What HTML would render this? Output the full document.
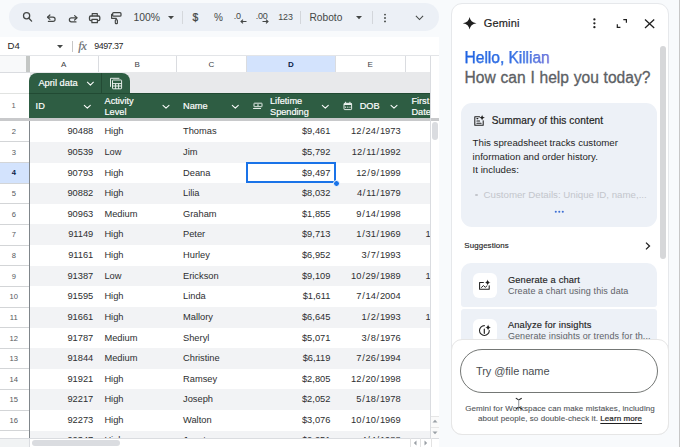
<!DOCTYPE html><html><head><meta charset="utf-8"><style>
*{margin:0;padding:0;box-sizing:border-box}
html,body{width:680px;height:447px;overflow:hidden;background:#f8fafc;font-family:"Liberation Sans",sans-serif;position:relative}
.a{position:absolute}
.t{position:absolute;white-space:nowrap;line-height:1}
</style></head><body>
<div class="a" style="left:9px;top:3px;width:429.5px;height:28px;border-radius:14px;background:#ecf0f6"></div>
<svg class="a" style="left:0;top:0" width="440" height="32" viewBox="0 0 440 32">
<g fill="none" stroke="#444746" stroke-linecap="round" stroke-linejoin="round">
<circle cx="26.6" cy="15.8" r="3.1" stroke-width="1.25"/>
<path d="M28.9 18.2 L31.6 21.1" stroke-width="1.35"/>
<path d="M49.9 15 L47.5 17.2 L49.9 19.4" stroke-width="1.2"/>
<path d="M47.8 17.2 H53 A2.1 2.1 0 0 1 53 21.4 H48.4" stroke-width="1.2"/>
<path d="M74.6 15.6 L77 17.8 L74.6 20" stroke-width="1.2"/>
<path d="M76.7 17.8 H71.4 A2.05 2.05 0 0 0 71.4 21.9 H76" stroke-width="1.2"/>
<path d="M92.2 16 V13.7 H97.3 V16" stroke-width="1.2"/>
<rect x="89.5" y="16" width="10.3" height="4.6" rx="1.3" stroke-width="1.3"/>
<rect x="91.9" y="19.3" width="5.5" height="3.4" fill="#ecf0f6" stroke-width="1.2"/>
<rect x="112.6" y="12.7" width="8.4" height="3.5" rx="1" stroke-width="1.25"/>
<path d="M112.6 14.4 H111.6 V18.3 H116.3 V19.7" stroke-width="1.15"/>
<rect x="115.3" y="19.7" width="2.1" height="3.9" rx="0.7" stroke-width="1.15"/>
</g></svg>
<div class="t" style="left:133.5px;top:13.3px;font-size:10.4px;color:#444746">100%</div>
<svg class="a" style="left:168px;top:15.5px" width="6" height="4" viewBox="0 0 6 4"><path d="M0 0 H6 L3 3.2 Z" fill="#444746"/></svg>
<div class="a" style="left:182px;top:10.5px;width:1px;height:13px;background:#d5d8dc"></div>
<div class="t" style="left:192.5px;top:12.8px;font-size:10.3px;color:#444746;-webkit-text-stroke:0.25px #444746">$</div>
<div class="t" style="left:214px;top:13.4px;font-size:10px;color:#444746">%</div>
<div class="t" style="left:233.8px;top:11.9px;font-size:9px;color:#444746;letter-spacing:-0.3px">.0</div>
<svg class="a" style="left:240px;top:19px" width="7" height="5" viewBox="0 0 7 5"><path d="M6.5 2.5 H1 M3 0.6 L1 2.5 L3 4.4" fill="none" stroke="#444746" stroke-width="1.1"/></svg>
<div class="t" style="left:255.8px;top:11.9px;font-size:9px;color:#444746;letter-spacing:-0.3px">.00</div>
<svg class="a" style="left:261.5px;top:19px" width="7" height="5" viewBox="0 0 7 5"><path d="M0.5 2.5 H6 M4 0.6 L6 2.5 L4 4.4" fill="none" stroke="#444746" stroke-width="1.1"/></svg>
<div class="t" style="left:278.2px;top:13.4px;font-size:8.9px;color:#444746">123</div>
<div class="a" style="left:299.5px;top:10.5px;width:0.8px;height:13px;background:#d3d6db"></div>
<div class="t" style="left:309.5px;top:13.2px;font-size:10.2px;color:#444746">Roboto</div>
<svg class="a" style="left:355.5px;top:15.5px" width="6" height="4" viewBox="0 0 6 4"><path d="M0 0 H6 L3 3.2 Z" fill="#444746"/></svg>
<div class="a" style="left:371.5px;top:10.5px;width:0.8px;height:13px;background:#d3d6db"></div>
<svg class="a" style="left:383px;top:12.5px" width="4" height="10" viewBox="0 0 4 10"><circle cx="2" cy="1.6" r="0.95" fill="#444746"/><circle cx="2" cy="5" r="0.95" fill="#444746"/><circle cx="2" cy="8.4" r="0.95" fill="#444746"/></svg>
<svg class="a" style="left:415px;top:15px" width="9" height="6" viewBox="0 0 9 6"><path d="M0.9 0.9 L4.5 4.5 L8.1 0.9" fill="none" stroke="#444746" stroke-width="1.05"/></svg>
<div class="a" style="left:0;top:37px;width:438.5px;height:19px;background:#fff"></div>
<div class="t" style="left:7.5px;top:41.3px;font-size:9.6px;color:#1f1f1f">D4</div>
<svg class="a" style="left:57px;top:44.5px" width="6" height="4" viewBox="0 0 6 4"><path d="M0 0 H6 L3 3.2 Z" fill="#444746"/></svg>
<div class="a" style="left:71.5px;top:41px;width:1px;height:11px;background:#c7c7c7"></div>
<div class="t" style="left:78.3px;top:39.6px;font-size:12.5px;color:#6b6f73;font-family:'Liberation Serif',serif;font-style:italic;letter-spacing:-0.6px;-webkit-text-stroke:0.2px #6b6f73">fx</div>
<div class="t" style="left:94.3px;top:41.8px;font-size:8.9px;color:#1f1f1f;letter-spacing:-0.5px">9497.37</div>
<div class="a" style="left:0;top:55.5px;width:430.5px;height:382.5px;background:#fff"></div>
<div class="a" style="left:0;top:55.5px;width:26px;height:16.5px;background:#f8f9fa"></div>
<div class="a" style="left:26px;top:55.5px;width:3.8px;height:16.5px;background:#c4c7c5"></div>
<div class="a" style="left:246.3px;top:55.5px;width:89.19999999999999px;height:16.5px;background:#d3e3fd"></div>
<div class="a" style="left:0;top:71.5px;width:430.5px;height:1px;background:#dadce0"></div>
<div class="a" style="left:97.5px;top:55.5px;width:1px;height:16.5px;background:#dadce0"></div>
<div class="a" style="left:176.0px;top:55.5px;width:1px;height:16.5px;background:#dadce0"></div>
<div class="a" style="left:245.8px;top:55.5px;width:1px;height:16.5px;background:#dadce0"></div>
<div class="a" style="left:335.0px;top:55.5px;width:1px;height:16.5px;background:#dadce0"></div>
<div class="a" style="left:404.5px;top:55.5px;width:1px;height:16.5px;background:#dadce0"></div>
<div class="t" style="left:29.5px;width:68.5px;top:60.6px;text-align:center;font-size:8px;color:#3c4043;font-weight:normal">A</div>
<div class="t" style="left:98px;width:78.5px;top:60.6px;text-align:center;font-size:8px;color:#3c4043;font-weight:normal">B</div>
<div class="t" style="left:176.5px;width:69.80000000000001px;top:60.6px;text-align:center;font-size:8px;color:#3c4043;font-weight:normal">C</div>
<div class="t" style="left:246.3px;width:89.19999999999999px;top:60.6px;text-align:center;font-size:8px;color:#0a1d47;font-weight:bold">D</div>
<div class="t" style="left:335.5px;width:69.5px;top:60.6px;text-align:center;font-size:8px;color:#3c4043;font-weight:normal">E</div>
<div class="a" style="left:29.5px;top:72px;width:401.0px;height:21.5px;background:#e8e9eb"></div>
<div class="a" style="left:0;top:93px;width:29.5px;height:1px;background:#e1e3e1"></div>
<div class="a" style="left:29.3px;top:72.8px;width:100.5px;height:21px;background:#2e5d43;border-radius:8px 8px 0 0"></div>
<div class="a" style="left:101.2px;top:73px;width:0.9px;height:20px;background:#234a34"></div>
<div class="t" style="left:38.4px;top:78.8px;font-size:9.3px;color:#fff;-webkit-text-stroke:0.18px #fff">April data</div>
<div class="a" style="left:29.3px;top:93px;width:401.2px;height:25.2px;background:#2e5d43"></div>
<div class="a" style="left:29.3px;top:92.9px;width:401.2px;height:0.8px;background:#214a33"></div>
<div class="t" style="left:35.6px;top:102px;font-size:9.2px;color:#ffffff;-webkit-text-stroke:0.18px #fff">ID</div>
<div class="t" style="left:104.5px;top:96px;font-size:9.2px;color:#ffffff;line-height:11px;-webkit-text-stroke:0.18px #fff">Activity<br>Level</div>
<div class="t" style="left:183px;top:101.8px;font-size:9.2px;color:#ffffff;-webkit-text-stroke:0.18px #fff">Name</div>
<div class="t" style="left:270px;top:96.3px;font-size:9.2px;color:#ffffff;line-height:10.2px;-webkit-text-stroke:0.18px #fff">Lifetime<br>Spending</div>
<div class="t" style="left:359.7px;top:102px;font-size:9.2px;color:#ffffff;-webkit-text-stroke:0.18px #fff">DOB</div>
<div class="t" style="left:411.4px;top:96.3px;font-size:9.2px;color:#ffffff;line-height:10.3px;-webkit-text-stroke:0.18px #fff">First<br>Date</div>
<svg class="a" style="left:0;top:70px" width="440" height="50" viewBox="0 70 440 50">
<g fill="none" stroke="#fff" stroke-width="1.05" stroke-linecap="round" stroke-linejoin="round"><path d="M84.3 105.3 l3 2.9 l3 -2.9"/><path d="M163 105.3 l3 2.9 l3 -2.9"/><path d="M232.3 105.3 l3 2.9 l3 -2.9"/><path d="M322.3 105.3 l3 2.9 l3 -2.9"/><path d="M391 105.3 l3 2.9 l3 -2.9"/><path d="M87.4 82.2 l3 2.9 l3 -2.9"/></g>
<g fill="none" stroke="#eef3f0" stroke-width="0.95">
<path d="M110.5 86.8 V78.3 H119.4"/>
<rect x="112.5" y="80" width="9.1" height="8.8" rx="0.6"/>
<path d="M112.5 83.6 H121.6 M112.5 86 H121.6 M115.6 83.6 V88.8 M118.6 83.6 V88.8"/>
<rect x="254" y="103.2" width="8" height="3.5" rx="0.4"/>
<path d="M253.1 108.5 H261"/>
<rect x="344" y="103.3" width="7.6" height="6.3" rx="0.7"/>
<path d="M345.6 101.8 V103.3 M349.9 101.8 V103.3"/>
</g>
<path d="M344 103.3 H351.6 V105 H344 Z" fill="#eef3f0"/>
<circle cx="258" cy="105" r="0.85" fill="#eef3f0"/>
<g fill="#eef3f0"><circle cx="345.6" cy="107.2" r="0.6"/><circle cx="347.8" cy="107.2" r="0.6"/><circle cx="350" cy="107.2" r="0.6"/></g>
</svg>
<div class="t" style="left:0;width:27px;text-align:center;top:102.3px;font-size:7.6px;color:#5f6368">1</div>
<div class="a" style="left:0;top:118.2px;width:439.0px;height:3px;background:#c8c9cb"></div>
<div class="a" style="left:0;top:121.30px;width:29px;height:20.63px;background:#ffffff"></div>
<div class="t" style="left:0;width:27.5px;text-align:center;top:128.20px;font-size:7.6px;color:#54585c;font-weight:normal">2</div>
<div class="t" style="left:29.5px;width:63.80px;text-align:right;top:127.25px;font-size:9.3px;color:#2d2e30">90488</div>
<div class="t" style="left:104.4px;top:127.25px;font-size:9.3px;color:#2d2e30">High</div>
<div class="t" style="left:183px;top:127.25px;font-size:9.3px;color:#2d2e30">Thomas</div>
<div class="t" style="left:246.3px;width:84.10px;text-align:right;top:127.25px;font-size:9.3px;color:#2d2e30">$9,461</div>
<div class="t" style="left:335.5px;width:65.10px;text-align:right;top:127.25px;font-size:9.3px;color:#2d2e30">12<span style="margin:0 0.75px">/</span>24<span style="margin:0 0.75px">/</span>1973</div>
<div class="a" style="left:29.5px;top:141.93px;width:401.0px;height:20.63px;background:#f2f3f5"></div>
<div class="a" style="left:0;top:141.93px;width:29px;height:20.63px;background:#ffffff"></div>
<div class="t" style="left:0;width:27.5px;text-align:center;top:148.83px;font-size:7.6px;color:#54585c;font-weight:normal">3</div>
<div class="t" style="left:29.5px;width:63.80px;text-align:right;top:147.88px;font-size:9.3px;color:#2d2e30">90539</div>
<div class="t" style="left:104.4px;top:147.88px;font-size:9.3px;color:#2d2e30">Low</div>
<div class="t" style="left:183px;top:147.88px;font-size:9.3px;color:#2d2e30">Jim</div>
<div class="t" style="left:246.3px;width:84.10px;text-align:right;top:147.88px;font-size:9.3px;color:#2d2e30">$5,792</div>
<div class="t" style="left:335.5px;width:65.10px;text-align:right;top:147.88px;font-size:9.3px;color:#2d2e30">12<span style="margin:0 0.75px">/</span>11<span style="margin:0 0.75px">/</span>1992</div>
<div class="a" style="left:0;top:162.56px;width:29px;height:20.63px;background:#d3e3fd"></div>
<div class="t" style="left:0;width:27.5px;text-align:center;top:169.46px;font-size:7.6px;color:#0a1d47;font-weight:bold">4</div>
<div class="t" style="left:29.5px;width:63.80px;text-align:right;top:168.51px;font-size:9.3px;color:#2d2e30">90793</div>
<div class="t" style="left:104.4px;top:168.51px;font-size:9.3px;color:#2d2e30">High</div>
<div class="t" style="left:183px;top:168.51px;font-size:9.3px;color:#2d2e30">Deana</div>
<div class="t" style="left:246.3px;width:84.10px;text-align:right;top:168.51px;font-size:9.3px;color:#2d2e30">$9,497</div>
<div class="t" style="left:335.5px;width:65.10px;text-align:right;top:168.51px;font-size:9.3px;color:#2d2e30">12<span style="margin:0 0.75px">/</span>9<span style="margin:0 0.75px">/</span>1999</div>
<div class="a" style="left:29.5px;top:183.19px;width:401.0px;height:20.63px;background:#f2f3f5"></div>
<div class="a" style="left:0;top:183.19px;width:29px;height:20.63px;background:#ffffff"></div>
<div class="t" style="left:0;width:27.5px;text-align:center;top:190.09px;font-size:7.6px;color:#54585c;font-weight:normal">5</div>
<div class="t" style="left:29.5px;width:63.80px;text-align:right;top:189.14px;font-size:9.3px;color:#2d2e30">90882</div>
<div class="t" style="left:104.4px;top:189.14px;font-size:9.3px;color:#2d2e30">High</div>
<div class="t" style="left:183px;top:189.14px;font-size:9.3px;color:#2d2e30">Lilia</div>
<div class="t" style="left:246.3px;width:84.10px;text-align:right;top:189.14px;font-size:9.3px;color:#2d2e30">$8,032</div>
<div class="t" style="left:335.5px;width:65.10px;text-align:right;top:189.14px;font-size:9.3px;color:#2d2e30">4<span style="margin:0 0.75px">/</span>11<span style="margin:0 0.75px">/</span>1979</div>
<div class="a" style="left:0;top:203.82px;width:29px;height:20.63px;background:#ffffff"></div>
<div class="t" style="left:0;width:27.5px;text-align:center;top:210.72px;font-size:7.6px;color:#54585c;font-weight:normal">6</div>
<div class="t" style="left:29.5px;width:63.80px;text-align:right;top:209.77px;font-size:9.3px;color:#2d2e30">90963</div>
<div class="t" style="left:104.4px;top:209.77px;font-size:9.3px;color:#2d2e30">Medium</div>
<div class="t" style="left:183px;top:209.77px;font-size:9.3px;color:#2d2e30">Graham</div>
<div class="t" style="left:246.3px;width:84.10px;text-align:right;top:209.77px;font-size:9.3px;color:#2d2e30">$1,855</div>
<div class="t" style="left:335.5px;width:65.10px;text-align:right;top:209.77px;font-size:9.3px;color:#2d2e30">9<span style="margin:0 0.75px">/</span>14<span style="margin:0 0.75px">/</span>1998</div>
<div class="a" style="left:29.5px;top:224.45px;width:401.0px;height:20.63px;background:#f2f3f5"></div>
<div class="a" style="left:0;top:224.45px;width:29px;height:20.63px;background:#ffffff"></div>
<div class="t" style="left:0;width:27.5px;text-align:center;top:231.35px;font-size:7.6px;color:#54585c;font-weight:normal">7</div>
<div class="t" style="left:29.5px;width:63.80px;text-align:right;top:230.40px;font-size:9.3px;color:#2d2e30">91149</div>
<div class="t" style="left:104.4px;top:230.40px;font-size:9.3px;color:#2d2e30">High</div>
<div class="t" style="left:183px;top:230.40px;font-size:9.3px;color:#2d2e30">Peter</div>
<div class="t" style="left:246.3px;width:84.10px;text-align:right;top:230.40px;font-size:9.3px;color:#2d2e30">$9,713</div>
<div class="t" style="left:335.5px;width:65.10px;text-align:right;top:230.40px;font-size:9.3px;color:#2d2e30">1<span style="margin:0 0.75px">/</span>31<span style="margin:0 0.75px">/</span>1969</div>
<div class="t" style="left:425.5px;top:230.40px;font-size:9.3px;color:#2d2e30">1</div>
<div class="a" style="left:0;top:245.08px;width:29px;height:20.63px;background:#ffffff"></div>
<div class="t" style="left:0;width:27.5px;text-align:center;top:251.98px;font-size:7.6px;color:#54585c;font-weight:normal">8</div>
<div class="t" style="left:29.5px;width:63.80px;text-align:right;top:251.03px;font-size:9.3px;color:#2d2e30">91161</div>
<div class="t" style="left:104.4px;top:251.03px;font-size:9.3px;color:#2d2e30">High</div>
<div class="t" style="left:183px;top:251.03px;font-size:9.3px;color:#2d2e30">Hurley</div>
<div class="t" style="left:246.3px;width:84.10px;text-align:right;top:251.03px;font-size:9.3px;color:#2d2e30">$6,952</div>
<div class="t" style="left:335.5px;width:65.10px;text-align:right;top:251.03px;font-size:9.3px;color:#2d2e30">3<span style="margin:0 0.75px">/</span>7<span style="margin:0 0.75px">/</span>1993</div>
<div class="a" style="left:29.5px;top:265.71px;width:401.0px;height:20.63px;background:#f2f3f5"></div>
<div class="a" style="left:0;top:265.71px;width:29px;height:20.63px;background:#ffffff"></div>
<div class="t" style="left:0;width:27.5px;text-align:center;top:272.61px;font-size:7.6px;color:#54585c;font-weight:normal">9</div>
<div class="t" style="left:29.5px;width:63.80px;text-align:right;top:271.66px;font-size:9.3px;color:#2d2e30">91387</div>
<div class="t" style="left:104.4px;top:271.66px;font-size:9.3px;color:#2d2e30">Low</div>
<div class="t" style="left:183px;top:271.66px;font-size:9.3px;color:#2d2e30">Erickson</div>
<div class="t" style="left:246.3px;width:84.10px;text-align:right;top:271.66px;font-size:9.3px;color:#2d2e30">$9,109</div>
<div class="t" style="left:335.5px;width:65.10px;text-align:right;top:271.66px;font-size:9.3px;color:#2d2e30">10<span style="margin:0 0.75px">/</span>29<span style="margin:0 0.75px">/</span>1989</div>
<div class="t" style="left:425.5px;top:271.66px;font-size:9.3px;color:#2d2e30">1</div>
<div class="a" style="left:0;top:286.34px;width:29px;height:20.63px;background:#ffffff"></div>
<div class="t" style="left:0;width:27.5px;text-align:center;top:293.24px;font-size:7.6px;color:#54585c;font-weight:normal">10</div>
<div class="t" style="left:29.5px;width:63.80px;text-align:right;top:292.29px;font-size:9.3px;color:#2d2e30">91595</div>
<div class="t" style="left:104.4px;top:292.29px;font-size:9.3px;color:#2d2e30">High</div>
<div class="t" style="left:183px;top:292.29px;font-size:9.3px;color:#2d2e30">Linda</div>
<div class="t" style="left:246.3px;width:84.10px;text-align:right;top:292.29px;font-size:9.3px;color:#2d2e30">$1,611</div>
<div class="t" style="left:335.5px;width:65.10px;text-align:right;top:292.29px;font-size:9.3px;color:#2d2e30">7<span style="margin:0 0.75px">/</span>14<span style="margin:0 0.75px">/</span>2004</div>
<div class="a" style="left:29.5px;top:306.97px;width:401.0px;height:20.63px;background:#f2f3f5"></div>
<div class="a" style="left:0;top:306.97px;width:29px;height:20.63px;background:#ffffff"></div>
<div class="t" style="left:0;width:27.5px;text-align:center;top:313.87px;font-size:7.6px;color:#54585c;font-weight:normal">11</div>
<div class="t" style="left:29.5px;width:63.80px;text-align:right;top:312.92px;font-size:9.3px;color:#2d2e30">91661</div>
<div class="t" style="left:104.4px;top:312.92px;font-size:9.3px;color:#2d2e30">High</div>
<div class="t" style="left:183px;top:312.92px;font-size:9.3px;color:#2d2e30">Mallory</div>
<div class="t" style="left:246.3px;width:84.10px;text-align:right;top:312.92px;font-size:9.3px;color:#2d2e30">$6,645</div>
<div class="t" style="left:335.5px;width:65.10px;text-align:right;top:312.92px;font-size:9.3px;color:#2d2e30">1<span style="margin:0 0.75px">/</span>2<span style="margin:0 0.75px">/</span>1993</div>
<div class="t" style="left:425.5px;top:312.92px;font-size:9.3px;color:#2d2e30">1</div>
<div class="a" style="left:0;top:327.60px;width:29px;height:20.63px;background:#ffffff"></div>
<div class="t" style="left:0;width:27.5px;text-align:center;top:334.50px;font-size:7.6px;color:#54585c;font-weight:normal">12</div>
<div class="t" style="left:29.5px;width:63.80px;text-align:right;top:333.55px;font-size:9.3px;color:#2d2e30">91787</div>
<div class="t" style="left:104.4px;top:333.55px;font-size:9.3px;color:#2d2e30">Medium</div>
<div class="t" style="left:183px;top:333.55px;font-size:9.3px;color:#2d2e30">Sheryl</div>
<div class="t" style="left:246.3px;width:84.10px;text-align:right;top:333.55px;font-size:9.3px;color:#2d2e30">$5,071</div>
<div class="t" style="left:335.5px;width:65.10px;text-align:right;top:333.55px;font-size:9.3px;color:#2d2e30">3<span style="margin:0 0.75px">/</span>8<span style="margin:0 0.75px">/</span>1976</div>
<div class="a" style="left:29.5px;top:348.23px;width:401.0px;height:20.63px;background:#f2f3f5"></div>
<div class="a" style="left:0;top:348.23px;width:29px;height:20.63px;background:#ffffff"></div>
<div class="t" style="left:0;width:27.5px;text-align:center;top:355.13px;font-size:7.6px;color:#54585c;font-weight:normal">13</div>
<div class="t" style="left:29.5px;width:63.80px;text-align:right;top:354.18px;font-size:9.3px;color:#2d2e30">91844</div>
<div class="t" style="left:104.4px;top:354.18px;font-size:9.3px;color:#2d2e30">Medium</div>
<div class="t" style="left:183px;top:354.18px;font-size:9.3px;color:#2d2e30">Christine</div>
<div class="t" style="left:246.3px;width:84.10px;text-align:right;top:354.18px;font-size:9.3px;color:#2d2e30">$6,119</div>
<div class="t" style="left:335.5px;width:65.10px;text-align:right;top:354.18px;font-size:9.3px;color:#2d2e30">7<span style="margin:0 0.75px">/</span>26<span style="margin:0 0.75px">/</span>1994</div>
<div class="a" style="left:0;top:368.86px;width:29px;height:20.63px;background:#ffffff"></div>
<div class="t" style="left:0;width:27.5px;text-align:center;top:375.76px;font-size:7.6px;color:#54585c;font-weight:normal">14</div>
<div class="t" style="left:29.5px;width:63.80px;text-align:right;top:374.81px;font-size:9.3px;color:#2d2e30">91921</div>
<div class="t" style="left:104.4px;top:374.81px;font-size:9.3px;color:#2d2e30">High</div>
<div class="t" style="left:183px;top:374.81px;font-size:9.3px;color:#2d2e30">Ramsey</div>
<div class="t" style="left:246.3px;width:84.10px;text-align:right;top:374.81px;font-size:9.3px;color:#2d2e30">$2,805</div>
<div class="t" style="left:335.5px;width:65.10px;text-align:right;top:374.81px;font-size:9.3px;color:#2d2e30">12<span style="margin:0 0.75px">/</span>20<span style="margin:0 0.75px">/</span>1998</div>
<div class="a" style="left:29.5px;top:389.49px;width:401.0px;height:20.63px;background:#f2f3f5"></div>
<div class="a" style="left:0;top:389.49px;width:29px;height:20.63px;background:#ffffff"></div>
<div class="t" style="left:0;width:27.5px;text-align:center;top:396.39px;font-size:7.6px;color:#54585c;font-weight:normal">15</div>
<div class="t" style="left:29.5px;width:63.80px;text-align:right;top:395.44px;font-size:9.3px;color:#2d2e30">92217</div>
<div class="t" style="left:104.4px;top:395.44px;font-size:9.3px;color:#2d2e30">High</div>
<div class="t" style="left:183px;top:395.44px;font-size:9.3px;color:#2d2e30">Joseph</div>
<div class="t" style="left:246.3px;width:84.10px;text-align:right;top:395.44px;font-size:9.3px;color:#2d2e30">$2,052</div>
<div class="t" style="left:335.5px;width:65.10px;text-align:right;top:395.44px;font-size:9.3px;color:#2d2e30">5<span style="margin:0 0.75px">/</span>18<span style="margin:0 0.75px">/</span>1978</div>
<div class="a" style="left:0;top:410.12px;width:29px;height:20.63px;background:#ffffff"></div>
<div class="t" style="left:0;width:27.5px;text-align:center;top:417.02px;font-size:7.6px;color:#54585c;font-weight:normal">16</div>
<div class="t" style="left:29.5px;width:63.80px;text-align:right;top:416.07px;font-size:9.3px;color:#2d2e30">92273</div>
<div class="t" style="left:104.4px;top:416.07px;font-size:9.3px;color:#2d2e30">High</div>
<div class="t" style="left:183px;top:416.07px;font-size:9.3px;color:#2d2e30">Walton</div>
<div class="t" style="left:246.3px;width:84.10px;text-align:right;top:416.07px;font-size:9.3px;color:#2d2e30">$3,076</div>
<div class="t" style="left:335.5px;width:65.10px;text-align:right;top:416.07px;font-size:9.3px;color:#2d2e30">10<span style="margin:0 0.75px">/</span>10<span style="margin:0 0.75px">/</span>1969</div>
<div class="a" style="left:29.5px;top:430.75px;width:401.0px;height:20.63px;background:#f2f3f5"></div>
<div class="a" style="left:0;top:430.75px;width:29px;height:20.63px;background:#ffffff"></div>
<div class="t" style="left:0;width:27.5px;text-align:center;top:437.65px;font-size:7.6px;color:#54585c;font-weight:normal">17</div>
<div class="t" style="left:29.5px;width:63.80px;text-align:right;top:435.80px;font-size:9.3px;color:#2d2e30">92347</div>
<div class="t" style="left:104.4px;top:435.80px;font-size:9.3px;color:#2d2e30">High</div>
<div class="t" style="left:183px;top:435.80px;font-size:9.3px;color:#2d2e30">Janet</div>
<div class="t" style="left:246.3px;width:84.10px;text-align:right;top:435.80px;font-size:9.3px;color:#2d2e30">$2,251</div>
<div class="t" style="left:335.5px;width:65.10px;text-align:right;top:435.80px;font-size:9.3px;color:#2d2e30">4<span style="margin:0 0.75px">/</span>4<span style="margin:0 0.75px">/</span>1988</div>
<div class="a" style="left:0;top:141.48px;width:29px;height:1px;background:#d3d5d7"></div>
<div class="a" style="left:0;top:162.11px;width:29px;height:1px;background:#d3d5d7"></div>
<div class="a" style="left:0;top:182.74px;width:29px;height:1px;background:#d3d5d7"></div>
<div class="a" style="left:0;top:203.37px;width:29px;height:1px;background:#d3d5d7"></div>
<div class="a" style="left:0;top:224.00px;width:29px;height:1px;background:#d3d5d7"></div>
<div class="a" style="left:0;top:244.63px;width:29px;height:1px;background:#d3d5d7"></div>
<div class="a" style="left:0;top:265.26px;width:29px;height:1px;background:#d3d5d7"></div>
<div class="a" style="left:0;top:285.89px;width:29px;height:1px;background:#d3d5d7"></div>
<div class="a" style="left:0;top:306.52px;width:29px;height:1px;background:#d3d5d7"></div>
<div class="a" style="left:0;top:327.15px;width:29px;height:1px;background:#d3d5d7"></div>
<div class="a" style="left:0;top:347.78px;width:29px;height:1px;background:#d3d5d7"></div>
<div class="a" style="left:0;top:368.41px;width:29px;height:1px;background:#d3d5d7"></div>
<div class="a" style="left:0;top:389.04px;width:29px;height:1px;background:#d3d5d7"></div>
<div class="a" style="left:0;top:409.67px;width:29px;height:1px;background:#d3d5d7"></div>
<div class="a" style="left:0;top:430.30px;width:29px;height:1px;background:#d3d5d7"></div>
<div class="a" style="left:0;top:450.93px;width:29px;height:1px;background:#d3d5d7"></div>
<div class="a" style="left:29px;top:121px;width:1px;height:317px;background:#80868b"></div>
<div class="a" style="left:245.7px;top:162.3px;width:90.7px;height:21.2px;border:2px solid #1a73e8"></div>
<div class="a" style="left:332.6px;top:179.8px;width:7px;height:7px;border-radius:50%;background:#1a73e8;border:1px solid #fff"></div>
<div class="a" style="left:430.5px;top:55.5px;width:8px;height:382.5px;background:#fff"></div>
<div class="a" style="left:430.2px;top:55.5px;width:0.8px;height:392px;background:#dadce0"></div>
<div class="a" style="left:0;top:55.2px;width:438.5px;height:0.6px;background:#e3e5e8"></div>
<div class="a" style="left:430.5px;top:118.2px;width:8.5px;height:3px;background:#c8c9cb"></div>
<div class="a" style="left:432.2px;top:122.4px;width:5.8px;height:17.5px;border-radius:3px;background:#dadce0"></div>
<div class="a" style="left:430.5px;top:416.2px;width:8.5px;height:22px;background:#fafafa"></div>
<div class="a" style="left:430.5px;top:416px;width:8.5px;height:0.8px;background:#e6e6e6"></div>
<div class="a" style="left:430.5px;top:427px;width:8.5px;height:0.8px;background:#e6e6e6"></div>
<svg class="a" style="left:432px;top:419px" width="6" height="4" viewBox="0 0 6 4"><path d="M0.5 3.5 L3 0.8 L5.5 3.5 Z" fill="#9aa0a6"/></svg>
<svg class="a" style="left:432px;top:431px" width="6" height="4" viewBox="0 0 6 4"><path d="M0.5 0.5 L3 3.2 L5.5 0.5 Z" fill="#9aa0a6"/></svg>
<div class="a" style="left:0;top:438px;width:439px;height:9px;background:#fff"></div>
<div class="a" style="left:0;top:438px;width:29px;height:9px;background:#f1f3f4"></div>
<div class="a" style="left:0;top:438px;width:439px;height:0.8px;background:#dadce0"></div>
<div class="a" style="left:29px;top:438px;width:0.8px;height:9px;background:#dadce0"></div>
<div class="a" style="left:31.5px;top:440px;width:88px;height:6px;border-radius:3px;background:#dadce0"></div>
<div class="a" style="left:410px;top:438px;width:0.8px;height:9px;background:#e3e3e3"></div>
<div class="a" style="left:420.3px;top:438px;width:0.8px;height:9px;background:#e3e3e3"></div>
<div class="a" style="left:430.5px;top:438px;width:0.8px;height:9px;background:#e3e3e3"></div>
<svg class="a" style="left:412.5px;top:440px" width="4" height="6" viewBox="0 0 4 6"><path d="M3.5 0.5 L0.8 3 L3.5 5.5 Z" fill="#9aa0a6"/></svg>
<svg class="a" style="left:424px;top:440px" width="4" height="6" viewBox="0 0 4 6"><path d="M0.5 0.5 L3.2 3 L0.5 5.5 Z" fill="#9aa0a6"/></svg>
<div class="a" style="left:450.5px;top:3.2px;width:218px;height:432px;background:#fff;border:1px solid #e6e8eb;border-radius:11px"></div>
<div class="a" style="left:678.5px;top:0;width:1.5px;height:447px;background:#c7c7c7"></div>
<div class="t" style="left:483.8px;top:17.6px;font-size:11px;color:#1f1f1f;-webkit-text-stroke:0.2px #1f1f1f;letter-spacing:0.15px">Gemini</div>
<div class="a" style="left:660.2px;top:45.9px;width:5.8px;height:213px;border-radius:3px;background:#d6d7d9"></div>
<div class="t" style="left:464.6px;top:50.3px;font-size:15.6px;letter-spacing:-0.05px;-webkit-text-stroke:0.25px #2f6de3;background:linear-gradient(90deg,#1b63e3 0%,#2f6fe6 50%,#4d7ae4 72%,#8a76d8 100%);-webkit-background-clip:text;background-clip:text;color:transparent">Hello, Killian</div>
<div class="t" style="left:464.6px;top:69.9px;font-size:15.6px;color:#5c6064;letter-spacing:0px;word-spacing:0.4px;-webkit-text-stroke:0.3px #5c6064">How can I help you today?</div>
<div class="a" style="left:461.2px;top:103.2px;width:195.5px;height:124.1px;border-radius:11px;background:#edf1f7"></div>
<div class="t" style="left:491.7px;top:115.8px;font-size:10.1px;color:#1f1f1f;-webkit-text-stroke:0.2px #1f1f1f;letter-spacing:0.12px">Summary of this content</div>
<div class="t" style="left:472.6px;top:136px;font-size:9.7px;color:#1f1f1f;line-height:13.7px">This spreadsheet tracks customer<br>information and order history.<br>It includes:</div>
<div class="a" style="left:475.3px;top:193.5px;width:2.6px;height:2.6px;border-radius:50%;background:#c3c6cc"></div>
<div class="t" style="left:483.6px;top:189.5px;font-size:9.7px;color:#c3c6cc">Customer Details: Unique ID, name,...</div>
<div class="t" style="left:464.3px;top:242px;font-size:7.9px;color:#1f1f1f;-webkit-text-stroke:0.15px #1f1f1f;letter-spacing:0.1px">Suggestions</div>
<div class="a" style="left:461.2px;top:263px;width:195.5px;height:44px;border-radius:10px 10px 3px 3px;background:#edf1f7"></div>
<div class="a" style="left:461.2px;top:308.9px;width:195.5px;height:44px;border-radius:3px 3px 10px 10px;background:#edf1f7"></div>
<div class="a" style="left:472.6px;top:273px;width:24.3px;height:24.7px;border-radius:6px;background:#fff"></div>
<div class="a" style="left:472.6px;top:318.5px;width:24.3px;height:24.7px;border-radius:6px;background:#fff"></div>
<div class="t" style="left:507.9px;top:276px;font-size:9.3px;color:#1f1f1f;-webkit-text-stroke:0.15px #1f1f1f;letter-spacing:0.15px">Generate a chart</div>
<div class="t" style="left:507.9px;top:286.6px;font-size:9px;color:#5f6368;letter-spacing:0.1px">Create a chart using this data</div>
<div class="t" style="left:507.9px;top:321.3px;font-size:9.3px;color:#1f1f1f;-webkit-text-stroke:0.15px #1f1f1f;letter-spacing:0.15px">Analyze for insights</div>
<div class="t" style="left:507.9px;top:332.2px;font-size:9px;color:#5f6368;letter-spacing:0.1px">Generate insights or trends for th...</div>
<div class="a" style="left:450.5px;top:338.8px;width:218px;height:96.2px;background:#fff;border:1px solid #e6e6e6;border-radius:11px"></div>
<div class="a" style="left:460px;top:349.4px;width:198px;height:43.2px;border:1px solid #747775;border-radius:22px;background:#fff"></div>
<div class="t" style="left:475.9px;top:366px;font-size:11px;color:#4a4d50;letter-spacing:-0.05px">Try @file name</div>
<div class="t" style="left:462px;top:403.8px;font-size:8px;color:#505458;width:196px;text-align:center;line-height:10.6px;letter-spacing:0.08px;-webkit-text-stroke:0.1px #505458">Gemini for Workspace can make mistakes, including<br>about people, so double-check it. <span style="color:#1f1f1f;-webkit-text-stroke:0.2px #1f1f1f;text-decoration:underline;text-underline-offset:1.5px">Learn more</span></div>
<svg class="a" style="left:440px;top:0" width="240" height="447" viewBox="440 0 240 447">
<path d="M469.6 16.9 C470.1 20.3 472.3 22.6 476.5 23.2 C472.3 23.8 470.1 26.1 469.6 29.5 C469.1 26.1 466.9 23.8 462.8 23.2 C466.9 22.6 469.1 20.3 469.6 16.9 Z" fill="#1f1f1f"/>
<g fill="#1f1f1f"><circle cx="594.4" cy="19.4" r="1.15"/><circle cx="594.4" cy="23.3" r="1.15"/><circle cx="594.4" cy="27.2" r="1.15"/></g>
<g fill="none" stroke="#1f1f1f" stroke-width="1.2">
<path d="M623.3 19.6 H626.4 V22.7 M617.3 24.3 V27.4 H620.4"/>
<path d="M645 19.6 L654.2 28 M654.2 19.6 L645 28" stroke-width="1.3"/>
<path d="M646 242.6 L649.5 246 L646 249.4" stroke-width="1.3"/>
</g>
<g fill="none" stroke="#1f1f1f" stroke-width="1.05" stroke-linejoin="round" stroke-linecap="round">
<path d="M479.6 116.8 H474.8 V125.3 H483.2 V120.8"/>
<path d="M476.9 118.6 H477.9 M476.9 120.9 H479.6 M476.9 123.3 H481.1"/>
<path d="M483.4 282.4 H479.6 V289.3 H489.2 V285.8"/>
<path d="M481.5 287.4 L483.4 285.6 L485.3 287.3 L486.9 285.9" stroke-width="1"/>
<path d="M484.4 325.6 A4.9 4.9 0 1 0 489.3 330.5"/>
<path d="M484.3 329.1 V333.3" stroke-width="1.15"/>
</g>
<g fill="#1f1f1f">
<path d="M482.1 114.8 C482.535 116.83 482.97 117.265 485.0 117.7 C482.97 118.135 482.535 118.57000000000001 482.1 120.60000000000001 C481.665 118.57000000000001 481.23 118.135 479.20000000000005 117.7 C481.23 117.265 481.665 116.83 482.1 114.8 Z"/>
<path d="M487.6 279.4 C488.05 281.5 488.5 281.95 490.6 282.4 C488.5 282.84999999999997 488.05 283.29999999999995 487.6 285.4 C487.15000000000003 283.29999999999995 486.70000000000005 282.84999999999997 484.6 282.4 C486.70000000000005 281.95 487.15000000000003 281.5 487.6 279.4 Z"/>
<path d="M488.1 324.4 C488.55 326.5 489.0 326.95 491.1 327.4 C489.0 327.84999999999997 488.55 328.29999999999995 488.1 330.4 C487.65000000000003 328.29999999999995 487.20000000000005 327.84999999999997 485.1 327.4 C487.20000000000005 326.95 487.65000000000003 326.5 488.1 324.4 Z"/>
</g>
<g fill="#3d6fd4"><circle cx="555.8" cy="211.8" r="1.05"/><circle cx="559.3" cy="211.8" r="1.05"/><circle cx="562.8" cy="211.8" r="1.05"/></g>
<g fill="none" stroke="#1f1f1f" stroke-width="1.1" stroke-linecap="round">
<path d="M516.2 398.4 L518.7 399.9 L521.3 398.4 M516.2 408.6 L518.7 407.1 L521.3 408.6"/>
<path d="M518.7 399.9 V407.1" stroke="#9aa0a6"/>
</g>
</svg>
</body></html>
